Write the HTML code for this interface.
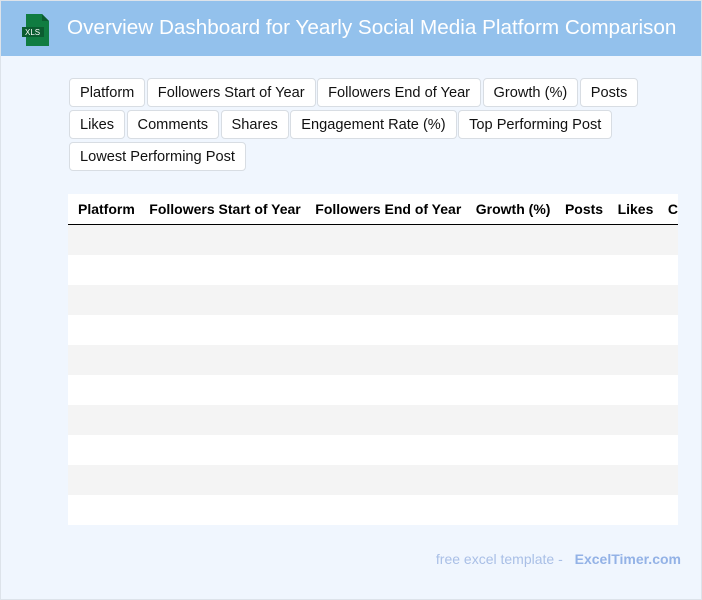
<!DOCTYPE html><html><head><style>
body{margin:0;width:702px;height:600px;background:#f0f6fe;font-family:"Liberation Sans",sans-serif;overflow:hidden;position:relative}
.frame{position:absolute;left:0;top:0;width:700px;height:598px;border:1px solid #dde3ea}
.hd{position:absolute;left:1px;top:1px;width:700px;height:55px;background:#93c1ec}
.hd h1{position:absolute;left:66px;top:15px;margin:0;font-weight:normal;font-size:20.7px;color:#fff;white-space:nowrap}
.chips{position:absolute;left:69px;top:78px;width:600px}
.c{display:inline-block;box-sizing:border-box;height:29px;line-height:29px;padding:0 10px;border:1px solid #d8dde3;border-radius:4px;background:#fff;font-size:14.6px;color:#111;margin:0 0 3px 0;margin-right:-3px}
.tb{position:absolute;left:68px;top:194px;width:610px;height:331px;background:#fff;overflow:hidden}
.th{height:30px;border-bottom:1px solid #000;white-space:nowrap;font-weight:bold;font-size:14px;line-height:30px}
.th span{margin-left:10px;margin-right:4.5px}
.r{height:30px}.r:nth-child(odd){background:#f4f4f4}
.ft{position:absolute;right:21px;top:551px;font-size:14px;color:#a9bfe6}
.ft b{color:#93b2e6;margin-left:8px}
</style></head><body><div class="frame"></div>
<div class="hd"><svg style="position:absolute;left:21px;top:13px" width="30" height="32" viewBox="0 0 30 32"><path d="M4 0h16l7 7v25H4z" fill="#107c41"/><path d="M20 0v7h7z" fill="#0b5c30"/><rect x="0" y="13" width="22" height="10" fill="#0b5c30"/><text x="3" y="21" font-size="8" fill="#fff" font-family="Liberation Sans">XLS</text></svg><h1>Overview Dashboard for Yearly Social Media Platform Comparison</h1></div>
<div class="chips"><span class="c">Platform</span> <span class="c">Followers Start of Year</span> <span class="c">Followers End of Year</span> <span class="c">Growth (%)</span> <span class="c">Posts</span><br><span class="c">Likes</span> <span class="c">Comments</span> <span class="c">Shares</span> <span class="c">Engagement Rate (%)</span> <span class="c">Top Performing Post</span><br><span class="c">Lowest Performing Post</span></div>
<div class="tb"><div class="th"><span>Platform</span><span>Followers Start of Year</span><span>Followers End of Year</span><span>Growth (%)</span><span>Posts</span><span>Likes</span><span>Comments</span></div>
<div><div class="r"></div><div class="r"></div><div class="r"></div><div class="r"></div><div class="r"></div><div class="r"></div><div class="r"></div><div class="r"></div><div class="r"></div><div class="r"></div></div></div>
<div class="ft">free excel template - <b>ExcelTimer.com</b></div>
</body></html>
